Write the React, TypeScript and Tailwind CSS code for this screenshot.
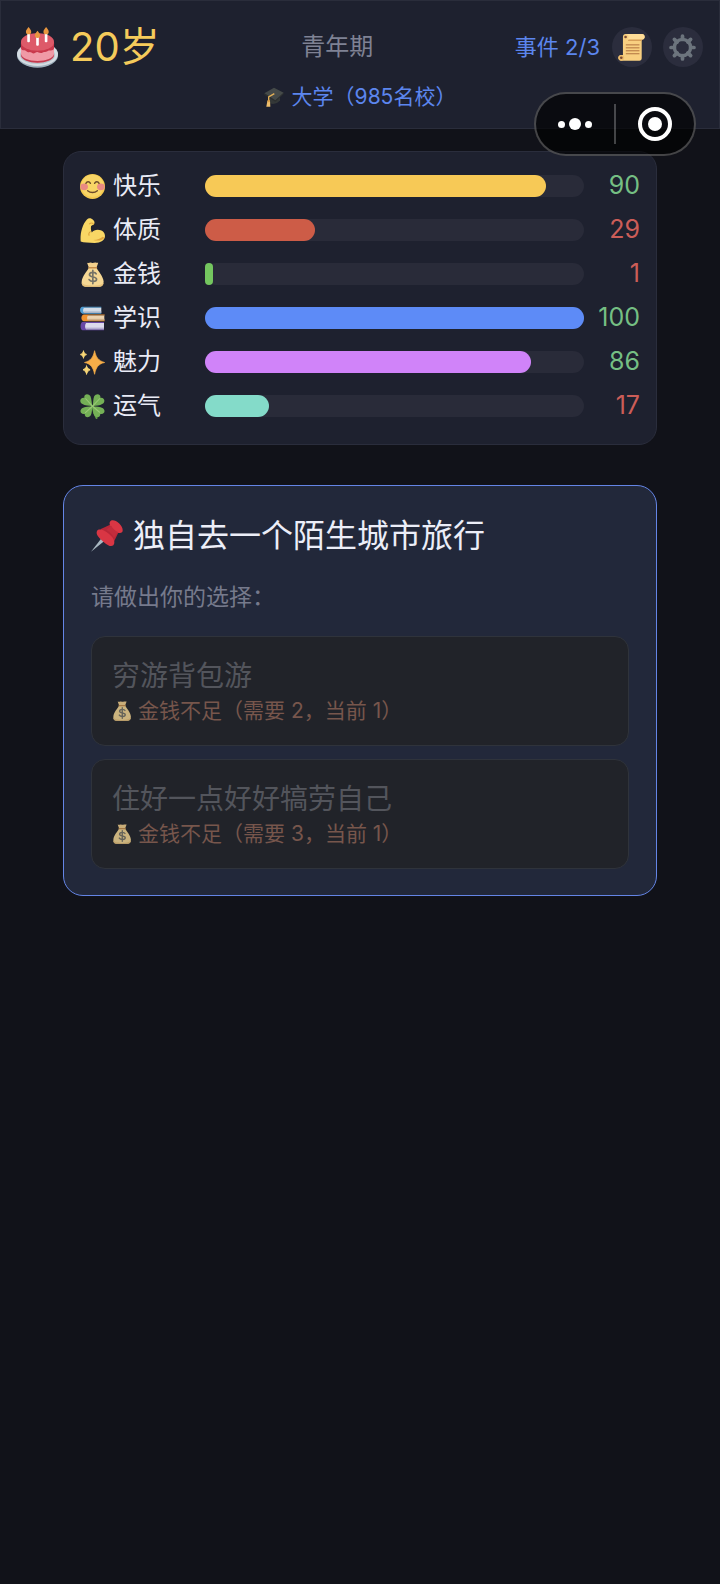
import type { ReactNode } from "react";

type IconProps = { className?: string };

const CakeIcon = ({ className }: IconProps) => (
  <svg viewBox="0 0 124 124" className={className} aria-hidden="true">
    <ellipse cx="62" cy="86" rx="62" ry="37" fill="#9fb0bd" />
    <ellipse cx="62" cy="82" rx="62" ry="36" fill="#d5dde3" />
    <ellipse cx="62" cy="85" rx="53" ry="27" fill="#b7c3cc" />
    <path d="M12 46v38c0 13 22 24 50 24s50-11 50-24V46z" fill="#f09aa6" />
    <path d="M12 82c2 12 23 21 50 21s48-9 50-21v5c-3 12-24 21-50 21S15 99 12 87z" fill="#c23a4e" />
    <path d="M12 45v20c3 8 9 4 13 6s6 7 12 5c5-1 7 3 12 4 6 0 8-5 14-4 6 2 9 4 15 1 5-3 9-1 14-4 5-4 17 1 20-8V45z" fill="#c9394c" />
    <ellipse cx="62" cy="45" rx="50" ry="27" fill="#dd5a69" />
    <g fill="#fff">
      <rect x="31" y="18" width="8" height="28" rx="3" />
      <rect x="58" y="29" width="8" height="28" rx="3" />
      <rect x="84" y="18" width="8" height="28" rx="3" />
    </g>
    <g fill="#e8963f">
      <path d="M35 0c4 6 8 9 8 14a8 8 0 0 1-16 0c0-5 4-8 8-14z" />
      <path d="M62 11c4 6 8 9 8 14a8 8 0 0 1-16 0c0-5 4-8 8-14z" />
      <path d="M88 0c4 6 8 9 8 14a8 8 0 0 1-16 0c0-5 4-8 8-14z" />
    </g>
  </svg>
);

const CapIcon = ({ className }: IconProps) => (
  <svg viewBox="0 0 60 60" className={className} aria-hidden="true">
    <path d="M14 24v22c8 8 26 6 34-6V22z" fill="#343838" />
    <path d="M1 19 30 2l29 15-25 24z" fill="#454a49" />
    <path d="M1 19v4l33 21 25-23v-4L34 40z" fill="#2c2f2f" />
    <path d="M31 20 14 30v14" fill="none" stroke="#e3b057" strokeWidth="4" />
    <path d="M10 42h8l1 17H7z" fill="#efbe6c" />
    <circle cx="14" cy="42" r="4" fill="#d99c45" />
  </svg>
);

const ScrollIcon = ({ className }: IconProps) => (
  <svg viewBox="0 0 80 82" className={className} aria-hidden="true">
    <path d="M22 0h49c6 0 9 4 9 9s-4 8-9 8v57c0 4-3 7-7 7H9c-5 0-9-3-9-8s4-9 9-9h5V9c0-6 3-9 8-9z" fill="#f8cf80" />
    <path d="M22 0h49c6 0 9 4 9 9s-4 8-9 8H28c2-2 3-5 3-8 0-5-3-9-9-9z" fill="#ffdd97" />
    <path d="M31 17h40v4H29z" fill="#d79f58" />
    <circle cx="22" cy="9" r="4" fill="#7b4b33" />
    <path d="M9 64c5 0 9 4 9 8 0 5-4 9-9 9s-9-4-9-9 4-8 9-8z" fill="#eebc6b" />
    <circle cx="9" cy="72" r="4" fill="#7b4b33" />
    <g stroke="#b0723f" strokeWidth="3" strokeLinecap="round">
      <path d="M24 33h39M24 42h39M24 51h39M24 60h39" />
    </g>
  </svg>
);

const GearIcon = ({ className }: IconProps) => (
  <svg viewBox="0 0 80 80" className={className} aria-hidden="true">
    <g stroke="#6c747d" strokeWidth="11" strokeLinecap="round">
      <path d="M40 6v10M40 64v10M6 40h10M64 40h10M16 16l8 8M56 56l8 8M64 16l-8 8M24 56l-8 8" />
    </g>
    <circle cx="40" cy="40" r="24" fill="none" stroke="#6c747d" strokeWidth="10" />
  </svg>
);

const SmileIcon = ({ className }: IconProps) => (
  <svg viewBox="0 0 72 72" className={className} aria-hidden="true">
    <circle cx="36" cy="36" r="36" fill="#f3c84f" />
    <circle cx="36" cy="34" r="32" fill="#f8d566" />
    <ellipse cx="12" cy="37" rx="11" ry="10" fill="#ea8a83" />
    <ellipse cx="60" cy="37" rx="11" ry="10" fill="#ea8a83" />
    <g fill="none" stroke="#6b4a2a" strokeWidth="4" strokeLinecap="round">
      <path d="M17 27c3-6 10-6 13 0M42 27c3-6 10-6 13 0M22 48c8 7 20 7 28 0" />
    </g>
  </svg>
);

const ArmIcon = ({ className }: IconProps) => (
  <svg viewBox="0 0 72 72" className={className} aria-hidden="true">
    <path d="M20 4c5-5 13-4 18 2 5 5 5 10 1 13l-7 4c-1 7-1 13 2 19 4-5 10-8 17-8 13 0 21 8 21 18 0 12-12 20-30 20-17 0-32-1-40-4C0 48 5 20 20 4z" fill="#f9d765" />
    <path d="M30 39c-4 3-6 7-4 11M39 18c-3-4-8-4-12-1" fill="none" stroke="#dda53d" strokeWidth="3" strokeLinecap="round" />
    <path d="M70 56c-5 9-18 11-32 7 13 0 21-3 27-9z" fill="#e0a43d" />
  </svg>
);

const MoneyIcon = ({ className }: IconProps) => (
  <svg viewBox="0 0 72 74" className={className} aria-hidden="true">
    <path d="M20 2c5 3 8-2 13 0 5 3 8-2 14 0l6 0-5 14H25z" fill="#f3d08c" />
    <path d="M25 17h23c5 11 20 25 21 41 0 10-5 15-12 15H15C7 73 3 68 4 58c1-16 16-30 21-41z" fill="#f5d794" />
    <path d="M4 60c5 9 14 8 22 9 12 2 32 2 43-7-1 7-5 11-12 11H15C8 73 4 68 4 60z" fill="#e6c07a" />
    <path d="M25 17h23" stroke="#c48c4a" strokeWidth="4" strokeLinecap="round" />
    <path d="M47 35c-3-6-20-6-20 3 0 9 21 4 21 13 0 9-18 8-22 1M37 25v39" fill="none" stroke="#757367" strokeWidth="5" strokeLinecap="round" />
  </svg>
);

const BooksIcon = ({ className }: IconProps) => (
  <svg viewBox="0 0 74 70" className={className} aria-hidden="true">
    <path d="M6 0h57v3H12v15h51v3H7C-2 18-2 3 6 0z" fill="#4f9bd0" />
    <path d="M12 3h51v15H12c-4-4-4-11 0-15z" fill="#d3dbe6" />
    <path d="M12 14h51v4H12z" fill="#a9b6c9" />
    <path d="M11 23h62v3H24v14h49v3H11c-9-3-9-17 0-20z" fill="#ee9130" />
    <path d="M24 26h48v14H24c-4-3-4-11 0-14z" fill="#ecd3b0" />
    <path d="M24 36h48v4H24z" fill="#cfb08a" />
    <path d="M7 45h64v3H19v19h52v3H7c-7-3-7-22 0-25z" fill="#6747a6" />
    <path d="M18 48h53v19H18c-4-5-4-14 0-19z" fill="#dcdaec" />
    <path d="M18 62h53v5H18z" fill="#b5aed2" />
  </svg>
);

const SparklesIcon = ({ className }: IconProps) => (
  <svg viewBox="0 0 72 70" className={className} aria-hidden="true">
    <path d="M42 1c4 19 11 29 29 34-18 4-25 14-29 34-4-20-11-30-29-34 18-5 25-15 29-34z" fill="#f7ae48" stroke="#f7ae48" strokeWidth="2" strokeLinejoin="round" />
    <path d="M10 3c2 6 3 8 9 9-6 1-7 3-9 9-2-6-3-8-9-9 6-1 7-3 9-9zM19 46c2 7 4 9 10 10-6 2-8 4-10 11-2-7-4-9-10-11 6-1 8-3 10-10z" fill="#f8d676" stroke="#f8d676" strokeWidth="3" />
  </svg>
);

const CloverIcon = ({ className }: IconProps) => (
  <svg viewBox="0 0 72 74" className={className} aria-hidden="true">
    <path d="M36 36c2 12 5 23 12 35" fill="none" stroke="#5d9a45" strokeWidth="6" strokeLinecap="round" />
    <g fill="#74b056">
      <path d="M36 36C33 28 34 17 30 7 25-3 9-1 12 11-1 9-4 23 5 29c9 6 21 5 31 7z" />
      <path d="M36 36c3-8 1-19 5-29 5-10 21-8 18 4 13-2 16 12 7 18-9 6-20 5-30 7z" />
      <path d="M36 36c-2 8-1 19-5 27-6 9-19 7-18-4C1 62-4 49 5 42c9-6 21-4 31-6z" />
      <path d="M36 36c10 2 22 0 31 6 9 7 4 20-8 17 1 11-12 13-18 4-4-8-3-19-5-27z" />
    </g>
    <path d="M35 35 16 14M37 35 57 14M35 37 15 55M37 37l20 17" stroke="#9ac877" strokeWidth="3" strokeLinecap="round" />
  </svg>
);

const PinIcon = ({ className }: IconProps) => (
  <svg viewBox="0 0 96 96" className={className} aria-hidden="true">
    <path d="M0 95 32 54l9 8z" fill="#a9b8c2" />
    <path d="M28 28 62 12l22 22-17 35z" fill="#b92738" />
    <path d="M18 33c5-9 22-4 37 10 16 14 18 26 12 33-7 5-15 2-30-11C21 51 14 42 18 33z" fill="#d93644" />
    <path d="M57 5c5-8 17-5 27 5s14 21 9 27c-6 5-15 1-25-8S53 12 57 5z" fill="#d93644" />
    <path d="M46 30 61 17c3 8 12 16 20 19L69 53c-5-10-13-18-23-23z" fill="#c22c3c" />
  </svg>
);

type Stat = {
  name: string;
  value: number;
  icon: ReactNode;
  bar: string;
};

const stats: Stat[] = [
  { name: "快乐", value: 90, icon: <SmileIcon className="size-[25px]" />, bar: "bg-[#f7c956]" },
  { name: "体质", value: 29, icon: <ArmIcon className="size-[25px]" />, bar: "bg-[#cd5c47]" },
  { name: "金钱", value: 1, icon: <MoneyIcon className="size-[25px]" />, bar: "bg-[#74c65f]" },
  { name: "学识", value: 100, icon: <BooksIcon className="size-[25px]" />, bar: "bg-[#5d8bf7]" },
  { name: "魅力", value: 86, icon: <SparklesIcon className="size-[25px]" />, bar: "bg-[#d083f9]" },
  { name: "运气", value: 17, icon: <CloverIcon className="size-[25px]" />, bar: "bg-[#84dbc9]" },
];

const choices = [
  { title: "穷游背包游", need: 2 },
  { title: "住好一点好好犒劳自己", need: 3 },
];

const money = 1;

const StatRow = ({ name, value, icon, bar }: Stat) => (
  <li className="flex h-11 items-center">
    <div className="flex w-[125px] items-center gap-2 text-2xl text-[#e9ebf6]">
      {icon}
      <span>{name}</span>
    </div>
    <div
      role="progressbar"
      aria-label={name}
      aria-valuenow={value}
      className="h-[22px] flex-1 rounded-full bg-[#292b39]"
    >
      <div className={`h-full min-w-2 rounded-full ${bar}`} style={{ width: `${value}%` }} />
    </div>
    <span className={`w-14 text-right text-[25px] ${value >= 50 ? "text-[#75bf83]" : "text-[#cc5d58]"}`}>
      {value}
    </span>
  </li>
);

// WeChat style capsule, floats above the page
const Capsule = () => (
  <div className="absolute top-[92px] right-6 flex h-16 w-[162px] items-center rounded-full border-2 border-white/25 bg-black/65">
    <button type="button" aria-label="更多" className="flex w-[78px] items-center justify-center gap-1">
      <span className="size-[7px] rounded-full bg-white" />
      <span className="size-3 rounded-full bg-white" />
      <span className="size-[7px] rounded-full bg-white" />
    </button>
    <span className="h-10 w-0.5 bg-white/25" />
    <button type="button" aria-label="关闭" className="flex flex-1 items-center justify-center">
      <span className="flex size-[34px] items-center justify-center rounded-full border-4 border-white">
        <span className="size-3.5 rounded-full bg-white" />
      </span>
    </button>
  </div>
);

export default function App() {
  return (
    <div className="relative min-h-screen bg-[#111219] pb-10 font-['Inter','Noto_Sans_CJK_SC',sans-serif]">
      <header className="border border-[#2a2d3b] bg-[#1e212f] px-4 pt-[22px] pb-4">
        <div className="flex h-12 items-center justify-between">
          <div className="flex items-center gap-3 text-[40px] leading-[48px] text-[#f5cb5b]">
            <CakeIcon className="size-[41px]" />
            <span>20岁</span>
          </div>
          <span className="text-2xl text-[#7f8294]">青年期</span>
          <div className="flex items-center">
            <span className="mr-3 text-[22px] text-[#5c86ee]">事件 2/3</span>
            <button type="button" aria-label="记录" className="mr-[11px] flex size-10 items-center justify-center rounded-full bg-[#2b2d3d]">
              <ScrollIcon className="size-[27px]" />
            </button>
            <button type="button" aria-label="设置" className="flex size-10 items-center justify-center rounded-full bg-[#2b2d3d]">
              <GearIcon className="size-[27px]" />
            </button>
          </div>
        </div>
        <div className="mt-[11px] flex items-center justify-center gap-2 text-[21px] leading-[30px] text-[#5c86ee]">
          <CapIcon className="size-5" />
          <span>大学（985名校）</span>
        </div>
      </header>

      <Capsule />

      <main className="px-[63px] pt-[22px]">
        <ul className="rounded-[18px] border border-[#2a2d3c] bg-[#1e212f] px-4 pt-3 pb-4">
          {stats.map((stat) => (
            <StatRow key={stat.name} {...stat} />
          ))}
        </ul>

        <section className="mt-10 rounded-[20px] border border-[#6485e6] bg-[#22283a] px-[27px] pt-[27px] pb-[26px]">
          <h1 className="flex items-center gap-[10px] text-[32px] leading-[46px] text-[#eceef8]">
            <PinIcon className="size-8" />
            <span>独自去一个陌生城市旅行</span>
          </h1>
          <p className="mt-[23px] text-[23px] leading-[30px] text-[#767a8c]">请做出你的选择：</p>
          <div className="mt-6 flex flex-col gap-[13px]">
            {choices.map(({ title, need }) => (
              <button
                key={title}
                type="button"
                disabled
                className="rounded-[14px] border border-[#2f333b] bg-[#212329] px-5 pt-5 pb-[18px] text-left"
              >
                <span className="block text-[28px] leading-[38px] text-[#53555c]">{title}</span>
                <span className="flex items-center gap-[6px] text-[21px] leading-8 text-[#77564c]">
                  <MoneyIcon className="size-5 opacity-80" />
                  <span>金钱不足（需要 {need}，当前 {money}）</span>
                </span>
              </button>
            ))}
          </div>
        </section>
      </main>
    </div>
  );
}
